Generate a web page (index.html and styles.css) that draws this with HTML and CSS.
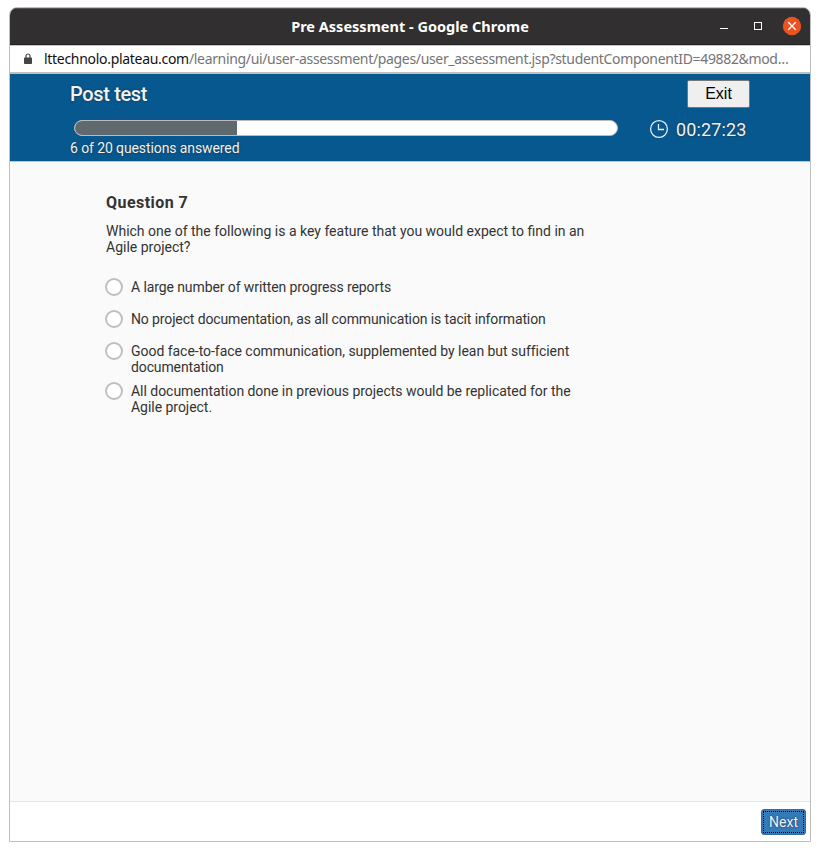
FILE: index.html
```html
<!DOCTYPE html>
<html lang="en">
<head>
<meta charset="utf-8">
<title>Pre Assessment</title>
<link rel="stylesheet" href="styles.css">
</head>
<body>
<div class="window">
  <div class="titlebar">
    <div class="title"><span>Pre Assessment - Google Chrome</span></div>
    <div class="controls">
      <svg width="90" height="20" viewBox="0 0 90 20">
        <path d="M4 10.500h8" stroke="#fff" fill="none"/>
        <rect x="38.500" y="4.500" width="7" height="7" stroke="#fff" fill="none"/>
        <circle cx="76" cy="8" r="9.200" fill="#e95420"/>
        <path d="M72.300 4.300l7.400 7.400M79.700 4.300l-7.400 7.400" stroke="#fff" stroke-width="1.300" fill="none"/>
      </svg>
    </div>
  </div>
  <div class="urlbar">
    <svg class="lock" width="8" height="12" viewBox="0 0 8 12"><path d="M2 5V3a2 2 0 0 1 4 0v2" fill="none" stroke="#444" stroke-width="1.200"/><rect y="4.500" width="8" height="6.500" rx=".8" fill="#444"/></svg>
    <div class="url"><span class="host">lttechnolo.plateau.com</span><span class="path">/learning/ui/user-assessment/pages/user_assessment.jsp?studentComponentID=49882&amp;mod…</span></div>
  </div>
  <header class="header">
    <div class="progress-side">
      <h1>Post test</h1>
      <div class="bar"><div class="fill"></div></div>
      <p class="answered">6 of 20 questions answered</p>
    </div>
    <div class="timer-side">
      <button class="exit">Exit</button>
      <div class="timer">
        <svg width="20" height="20" viewBox="0 0 20 20" fill="none" stroke="#e8eef3" stroke-width="1.300"><circle cx="10" cy="10" r="8.400"/><path d="M9.500 5v5.500H15"/></svg>
        <span class="time">00:27:23</span>
      </div>
    </div>
  </header>
  <main class="content">
    <h2>Question 7</h2>
    <p class="prompt">Which one of the following is a key feature that you would expect to find in an<br>Agile project?</p>
    <ul class="options">
      <li><i class="radio"></i><p class="tight">A large number of written progress reports</p></li>
      <li><i class="radio"></i><p class="tighter">No project documentation, as all communication is tacit information</p></li>
      <li><i class="radio"></i><p>Good face-to-face communication, supplemented by lean but sufficient<br><span class="tighter">documentation</span></p></li>
      <li><i class="radio"></i><p>All documentation done in previous projects would be replicated for the<br>Agile project.</p></li>
    </ul>
  </main>
  <footer class="footer"><button class="next">Next</button></footer>
</div>
</body>
</html>
```
FILE: styles.css
```css
* { box-sizing: border-box; }
body { margin: 0; background: #fff; font-family: Roboto, sans-serif; color: #333; }
h1, h2, p, ul { margin: 0; padding: 0; font-weight: 400; }
.window { width: 802px; height: 835px; margin: 7px 0 0 9px; border: 1px solid #c0c0c0; border-radius: 8px 8px 0 0; overflow: hidden; display: flex; flex-direction: column; background: #fff; }
.titlebar { height: 37px; flex: none; display: grid; grid-template-columns: 1fr; background: #322f30; border-top: 1px solid #555253; border-bottom: 1px solid #222; }
.title { grid-area: 1 / 1; text-align: center; font: bold 14.5px/34px "Noto Sans", sans-serif; color: #fff; letter-spacing: .01px; }
.controls { grid-area: 1 / 1; justify-self: end; margin: 9px 4px 0 0; height: 20px; }
.controls svg { display: block; overflow: visible; }
.urlbar { height: 29px; flex: none; border-top: 1px solid #c8c8c8; border-bottom: 2px solid #c0c0c0; display: flex; padding-left: 14px; }
.lock { margin-top: 7px; flex: none; }
.url { margin-left: 12px; white-space: nowrap; font: 14px/26px "Noto Sans", sans-serif; }
.host { color: #111; letter-spacing: -.3px; }
.path { color: #747476; letter-spacing: -.335px; }
.header { height: 88px; flex: none; background: #07588f; border-bottom: 1px solid #c0c4c8; display: flex; justify-content: space-between; padding: 0 60px; color: #f0f2f4; text-shadow: 0 0 2px #172b3c; }
.progress-side { width: 550px; }
h1 { font-size: 20px; font-weight: 500; line-height: 24px; margin-top: 8px; letter-spacing: -.35px; }
.bar { width: 544px; height: 16px; margin: 14px 0 0 4px; background: #fff; border: 1px solid #bbb; border-radius: 8px; overflow: hidden; }
.fill { width: 162px; height: 100%; background: #5f696e; }
.answered { font-size: 14px; line-height: 18px; margin-top: 3px; letter-spacing: -.1px; }
.timer-side { width: 102px; display: flex; flex-direction: column; }
.exit { width: 63px; height: 28px; margin: 6px 0 0 39px; padding: 0; border: 1px solid #767676; border-radius: 2px; background: #efefef; color: #000; font: 16px "Liberation Sans", sans-serif; }
.timer { display: flex; height: 24px; margin-top: 9px; line-height: 26px; font-size: 18px; letter-spacing: .12px; }
.timer svg { margin: 2px 7px 0 1px; flex: none; }
.content { height: 639px; flex: none; background: #fafafa; padding: 31px 96px; }
h2 { font-size: 16px; font-weight: 700; line-height: 20px; letter-spacing: .45px; }
.prompt { font-size: 14px; line-height: 16px; margin-top: 10px; white-space: nowrap; }
.options { list-style: none; margin-top: 23px; }
.options li { display: flex; font-size: 14px; line-height: 16px; min-height: 32px; margin-left: -1px; white-space: nowrap; }
.options li:nth-child(3) { height: 40px; }
.options p { margin: 1px 0 0 8px; letter-spacing: -.035px; }
.options .tight { letter-spacing: -.095px; }
.options .tighter { letter-spacing: -.125px; }
.radio { width: 18px; height: 18px; border: 2px solid #bfbfbf; border-radius: 50%; background: #fff; flex: none; }
.footer { flex: 1; border-top: 1px solid #e5e5e5; display: flex; justify-content: flex-end; align-items: flex-start; padding: 7px 4px 0; }
.next { width: 45px; height: 26px; padding: 0; border: 1px solid #2e6da4; border-radius: 3px; background: #337ab7; color: #f0f2f4; font: 14px Roboto, sans-serif; text-shadow: 0 0 2px #172b3c; outline: 1px dotted #000; outline-offset: -3px; }
```
